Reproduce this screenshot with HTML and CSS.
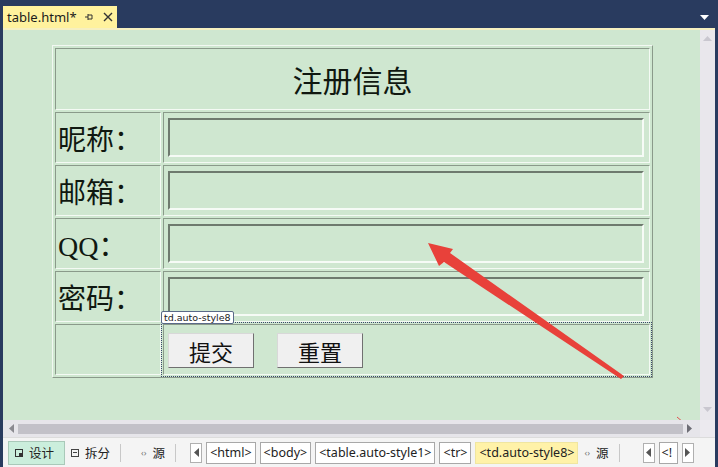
FILE: index.html
```
<!DOCTYPE html>
<html lang="zh-CN">
<head>
    <meta charset="UTF-8">
    <title>table.html</title>
    <link rel="stylesheet" href="styles.css">
</head>
<body>
<div class="window">
    <div class="titlebar">
        <div class="tab">
            <span class="tab-name">table.html*</span>
            <svg class="pin" width="10" height="10" viewBox="0 0 10 10"><path d="M1 5h3M4 2v6M4 3h4v4H4" fill="none" stroke="#333" stroke-width="1"/></svg>
            <svg class="close" width="10" height="10" viewBox="0 0 10 10"><path d="M1 1l8 8M9 1l-8 8" stroke="#333" stroke-width="1.4"/></svg>
        </div>
        <svg class="drop" width="9" height="6" viewBox="0 0 9 6"><path d="M0 0h9L4.5 5z" fill="#fff"/></svg>
    </div>
    <div class="tabline"></div>
    <div class="main">
        <div class="canvas">
            <table class="form">
                <tr><td colspan="2" class="title">注册信息</td></tr>
                <tr><td class="label">昵称：</td><td class="field"><input type="text"></td></tr>
                <tr><td class="label">邮箱：</td><td class="field"><input type="text"></td></tr>
                <tr><td class="label">QQ：</td><td class="field"><input type="text"></td></tr>
                <tr><td class="label">密码：</td><td class="field"><input type="text"></td></tr>
                <tr><td class="label"></td><td class="field buttons selected">
                    <span class="tip">td.auto-style8</span>
                    <button>提交</button><button>重置</button>
                </td></tr>
            </table>
            <svg class="arrow" width="697" height="390" viewBox="3 30 697 390">
                <polygon points="428,243 453,249 450,253 624,376 621,379 444,262 439,266" fill="#e8413a"/>
                <line x1="677" y1="417" x2="690" y2="428" stroke="#e05050" stroke-width="1"/>
            </svg>
        </div>
        <div class="vscroll">
            <svg width="9" height="5" viewBox="0 0 9 5"><path d="M0 5h9L4.5 0z" fill="#c9c7cf"/></svg>
            <svg width="9" height="5" viewBox="0 0 9 5"><path d="M0 0h9L4.5 5z" fill="#c9c7cf"/></svg>
        </div>
    </div>
    <div class="hscroll">
        <svg width="5" height="9" viewBox="0 0 5 9"><path d="M5 0v9L0 4.5z" fill="#8a8a90"/></svg>
        <div class="thumb"></div>
        <svg width="5" height="9" viewBox="0 0 5 9"><path d="M0 0v9L5 4.5z" fill="#6d6d75"/></svg>
        <div class="corner"></div>
    </div>
    <div class="statusbar">
        <span class="view active"><i class="ico sq"></i>设计</span>
        <span class="view"><i class="ico split"></i>拆分</span>
        <span class="sep"></span>
        <span class="view"><i class="ico code">‹›</i>源</span>
        <span class="sep"></span>
        <span class="nav"><svg width="5" height="9" viewBox="0 0 5 9"><path d="M5 0v9L0 4.5z" fill="#555"/></svg></span>
        <span class="tag">&lt;html&gt;</span>
        <span class="tag">&lt;body&gt;</span>
        <span class="tag">&lt;table.auto-style1&gt;</span>
        <span class="tag">&lt;tr&gt;</span>
        <span class="tag current">&lt;td.auto-style8&gt;</span>
        <span class="view src"><i class="ico code">‹›</i>源</span>
        <span class="sep"></span>
        <span class="nav far"><svg width="5" height="9" viewBox="0 0 5 9"><path d="M5 0v9L0 4.5z" fill="#555"/></svg></span>
        <span class="tag cut">&lt;!</span>
        <span class="nav"><svg width="5" height="9" viewBox="0 0 5 9"><path d="M0 0v9L5 4.5z" fill="#555"/></svg></span>
    </div>
</div>
</body>
</html>
```
FILE: styles.css
```
*{
    margin: 0;
    padding: 0;
    box-sizing: border-box;
}
body{
    width: 718px;
    height: 467px;
    overflow: hidden;
    background-color: #293b5f;
    font-family: "Noto Sans", "Noto Sans CJK SC", sans-serif;
}
.window{
    height: 467px;
    padding: 0 3px;
    display: flex;
    flex-direction: column;
}
.titlebar{
    height: 28px;
    display: flex;
    align-items: flex-end;
    justify-content: space-between;
}
.tab{
    width: 114px;
    height: 22px;
    background-color: #fff29d;
    display: flex;
    align-items: center;
    padding-left: 4px;
    font-size: 13px;
    color: #1b1b1b;
}
.tab-name{
    width: 77px;
}
.close{
    margin-left: 9px;
}
.drop{
    margin: 0 6px 7px 0;
}
.tabline{
    height: 2px;
    background-color: #f6f0c0;
}
.main{
    height: 390px;
    display: flex;
}
.canvas{
    position: relative;
    flex: 1;
    background-color: #cfe7d0;
    padding: 15px 0 0 49px;
}
.vscroll{
    width: 15px;
    background-color: #e9e7ec;
    display: flex;
    flex-direction: column;
    justify-content: space-between;
    align-items: center;
    padding: 6px 0 8px;
}
.form{
    width: 601px;
    border: 1px solid;
    border-color: #f2f8f2 #8a9a8a #8a9a8a #f2f8f2;
    border-spacing: 2px;
    font-family: "Liberation Serif", "Noto Sans CJK SC", serif;
    color: #101810;
}
.form td{
    border: 1px solid;
    border-color: #8a9a8a #f4faf4 #f4faf4 #8a9a8a;
}
.title{
    height: 62px;
    text-align: center;
    font-size: 30px;
}
.label{
    width: 110px;
    height: 51px;
    font-size: 28px;
    padding-left: 2px;
}
.field{
    padding: 0 5px 0 4px;
}
.field input{
    display: block;
    width: 476px;
    height: 39px;
    border: 2px solid;
    border-color: #6e7a6e #f6fbf6 #f6fbf6 #6e7a6e;
    background-color: #cfe7d0;
}
.buttons{
    position: relative;
    padding-top: 2px;
}
.selected{
    outline: 1px dotted #39476a;
    outline-offset: 1px;
}
.buttons button{
    width: 86px;
    height: 35px;
    margin-right: 23px;
    font-family: "Liberation Serif", "Noto Sans CJK SC", serif;
    font-size: 22px;
    color: #111;
    background-color: #f0f0f0;
    border: 1px solid;
    border-color: #d8d8d8 #707070 #707070 #d8d8d8;
}
.tip{
    position: absolute;
    left: -3px;
    top: -14px;
    height: 13px;
    padding: 0 2px;
    font-family: "DejaVu Sans", sans-serif;
    font-size: 9.5px;
    line-height: 11px;
    color: #222;
    background-color: #fff;
    border: 1px solid #5a6a88;
    border-radius: 2px;
}
.arrow{
    position: absolute;
    left: 0;
    top: 0;
    pointer-events: none;
}
.hscroll{
    height: 17px;
    background-color: #e6e5ea;
    display: flex;
    align-items: center;
    padding-left: 6px;
}
.hscroll .thumb{
    width: 665px;
    height: 10px;
    margin: 0 4px;
    background-color: #c2c1c8;
}
.hscroll .corner{
    margin-left: auto;
    width: 15px;
    height: 17px;
    background-color: #eceaef;
}
.statusbar{
    flex: 1;
    background-color: #f4f4f4;
    border-top: 1px solid #dcdcdc;
    display: flex;
    align-items: center;
    padding-left: 5px;
    font-size: 12.5px;
    color: #222;
}
.view{
    height: 24px;
    display: flex;
    align-items: center;
    padding: 0 8px 0 6px;
    gap: 6px;
}
.view.active{
    width: 57px;
    background-color: #cbeedc;
    border: 1px solid #a9c9b9;
}
.ico{
    display: inline-block;
    width: 8px;
    height: 8px;
    font-style: normal;
}
.ico.sq{
    border: 1px solid #333;
    background: linear-gradient(#333, #333) 3px 3px / 3px 3px no-repeat;
}
.ico.split{
    border: 1px solid #444;
    background: linear-gradient(#444, #444) 1px 2px / 4px 1px no-repeat;
}
.ico.code{
    width: auto;
    height: auto;
    font-size: 9px;
    color: #777;
}
.sep{
    width: 1px;
    height: 18px;
    background-color: #c8c8c8;
    margin: 0 14px 0 2px;
}
.nav{
    width: 12px;
    height: 20px;
    border: 1px solid #b0b0b0;
    background-color: #fff;
    display: flex;
    align-items: center;
    justify-content: center;
    margin-right: 4px;
}
.nav.far{
    margin-left: 9px;
}
.tag{
    height: 22px;
    line-height: 20px;
    padding: 0 3px;
    margin-right: 4px;
    border: 1px solid #a8a8a8;
    background-color: #fff;
    font-size: 12.5px;
    white-space: nowrap;
}
.tag.current{
    background-color: #fff2a8;
    border-color: #f0e6a0;
}
.tag.cut{
    width: 19px;
    overflow: hidden;
    padding: 0 2px;
}
.view.src{
    padding-left: 2px;
}
```
